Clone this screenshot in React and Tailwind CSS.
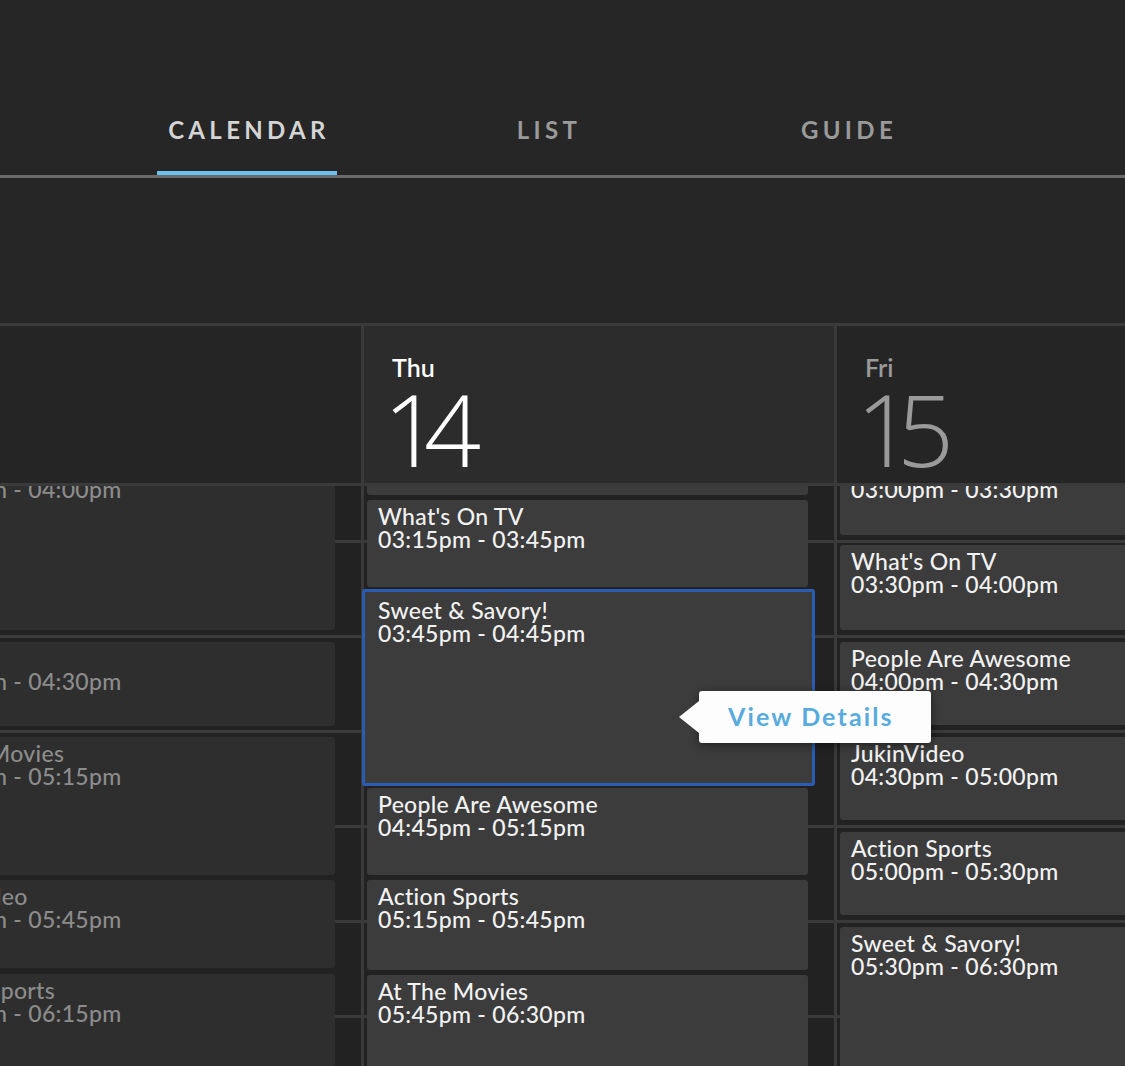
import React from 'react'

const BODY_TOP = 486

// tops / bottoms are page y positions, measured off the time grid (95px per half hour)
const days = [
  {
    id: 'wed',
    name: 'Wed',
    num: '13',
    past: true,
    events: [
      { title: 'Sweet & Savory!', time: '03:00pm - 04:00pm', top: 450, bottom: 630 },
      { title: 'Fails', time: '04:00pm - 04:30pm', top: 642, bottom: 726 },
      { title: 'At The Movies', time: '04:30pm - 05:15pm', top: 737, bottom: 875 },
      { title: 'JukinVideo', time: '05:15pm - 05:45pm', top: 880, bottom: 968 },
      { title: 'Action Sports', time: '05:45pm - 06:15pm', top: 974, bottom: 1100 },
    ],
  },
  {
    id: 'thu',
    name: 'Thu',
    num: '14',
    today: true,
    events: [
      { title: 'JukinVideo', time: '02:45pm - 03:15pm', top: 405, bottom: 495 },
      { title: "What's On TV", time: '03:15pm - 03:45pm', top: 500, bottom: 587 },
      { title: 'Sweet & Savory!', time: '03:45pm - 04:45pm', top: 589, bottom: 786, selected: true },
      { title: 'People Are Awesome', time: '04:45pm - 05:15pm', top: 788, bottom: 875 },
      { title: 'Action Sports', time: '05:15pm - 05:45pm', top: 880, bottom: 970 },
      { title: 'At The Movies', time: '05:45pm - 06:30pm', top: 975, bottom: 1120 },
    ],
  },
  {
    id: 'fri',
    name: 'Fri',
    num: '15',
    events: [
      { title: 'At The Movies', time: '03:00pm - 03:30pm', top: 450, bottom: 535 },
      { title: "What's On TV", time: '03:30pm - 04:00pm', top: 545, bottom: 630 },
      { title: 'People Are Awesome', time: '04:00pm - 04:30pm', top: 642, bottom: 725 },
      { title: 'JukinVideo', time: '04:30pm - 05:00pm', top: 737, bottom: 820 },
      { title: 'Action Sports', time: '05:00pm - 05:30pm', top: 832, bottom: 915 },
      { title: 'Sweet & Savory!', time: '05:30pm - 06:30pm', top: 927, bottom: 1120 },
    ],
  },
]

const tabs = [
  { id: 'calendar', label: 'Calendar', active: true },
  { id: 'list', label: 'List' },
  { id: 'guide', label: 'Guide' },
]

const EventCard = ({ event, past }) => {
  const style = { top: event.top - BODY_TOP, height: event.bottom - event.top }

  if (event.selected) {
    return (
      <div
        className="absolute left-[-2px] w-[453px] rounded-[3px] border-[3px] border-[#2b5cb3] bg-[#3c3c3c] pt-[7px] pl-[13px] text-[#f2f2f2] z-[2]"
        style={style}
      >
        <p className="text-[23px] leading-[23px] font-medium tracking-[0.3px]">{event.title}</p>
        <p className="text-[23px] leading-[23px] font-medium tracking-[0.3px]">{event.time}</p>
      </div>
    )
  }

  return (
    <div
      className={`absolute left-[3px] w-[441px] rounded-[3px] pt-[5px] ${
        past ? 'pl-[20px] bg-[#2e2e2e] text-[#8c8c8c]' : 'pl-[11px] bg-[#3c3c3c] text-[#f2f2f2]'
      }`}
      style={style}
    >
      <p className="text-[23px] leading-[23px] font-medium tracking-[0.3px] whitespace-nowrap">{event.title}</p>
      <p className="text-[23px] leading-[23px] font-medium tracking-[0.3px] whitespace-nowrap">{event.time}</p>
    </div>
  )
}

const App = () => {
  return (
    <div
      className="relative w-[1125px] h-[1066px] overflow-hidden bg-[#262626]"
      style={{ fontFamily: 'Lato, "Open Sans", sans-serif' }}
    >
      {/* Tabs */}
      <div className="h-[178px] border-b-[3px] border-[#6a6a6a]">
        <div className="flex h-full pl-[97px]">
          {tabs.map(tab => (
            <div key={tab.id} className="w-[300px] flex flex-col items-center justify-end">
              <span
                className={`text-[24px] leading-[22px] font-bold uppercase tracking-[0.18em] mb-[30px] ml-[4px] ${
                  tab.active ? 'text-[#d4d4d4]' : 'text-[#9a9a9a]'
                }`}
              >
                {tab.label}
              </span>
              <div className={`w-[180px] h-[4px] ${tab.active ? 'bg-[#6cc1ef]' : 'bg-transparent'}`} />
            </div>
          ))}
        </div>
      </div>

      {/* Spacer above the week */}
      <div className="h-[145px]" />

      {/* Day headers */}
      <div className="flex ml-[-112px] border-y-[3px] border-[#3a3a3a]">
        {days.map(day => (
          <div
            key={day.id}
            className={`w-[473px] shrink-0 h-[157px] border-l-[3px] border-[#3a3a3a] pl-[28px] pt-[27px] ${
              day.today ? 'bg-[#2c2c2c]' : 'bg-[#252525]'
            }`}
          >
            <p
              className={`text-[25px] leading-[28px] font-semibold ${
                day.today ? 'text-white' : 'text-[#9a9a9a]'
              }`}
            >
              {day.name}
            </p>
            <p
              className={`font-['Open_Sans',sans-serif] text-[100px] leading-[100px] font-light tracking-[-0.16em] mt-[-3px] ml-[-9px] ${
                day.today ? 'text-white' : 'text-[#9a9a9a]'
              } ${day.past ? 'invisible' : ''}`}
            >
              {day.num}
            </p>
          </div>
        ))}
      </div>

      {/* Schedule body */}
      <div className="flex ml-[-112px] h-[580px] overflow-hidden">
        {days.map(day => (
          <div key={day.id} className="relative w-[473px] shrink-0 border-l-[3px] border-[#3a3a3a] bg-[#222222]">
            <div className="pt-[54px]">
              {[0, 1, 2, 3, 4, 5].map(i => (
                <div key={i} className="h-[95px] border-t-[3px] border-[#3a3a3a]" />
              ))}
            </div>
            {day.events.map(event => (
              <EventCard key={event.time} event={event} past={day.past} />
            ))}
          </div>
        ))}
      </div>

      {/* Tooltip */}
      <div className="absolute left-[699px] top-[691px] w-[232px] h-[52px] z-10 rounded-[3px] bg-[#fdfdfd] shadow-[0_2px_10px_rgba(0,0,0,0.45)] flex items-center pl-[29px] pb-[3px]">
        <div className="absolute left-[-20px] top-[10px] w-0 h-0 border-y-[16px] border-y-transparent border-r-[20px] border-r-[#fdfdfd]" />
        <span className="text-[25px] leading-[28px] font-bold tracking-[0.085em] text-[#58abdd]">View Details</span>
      </div>
    </div>
  )
}

export default App
